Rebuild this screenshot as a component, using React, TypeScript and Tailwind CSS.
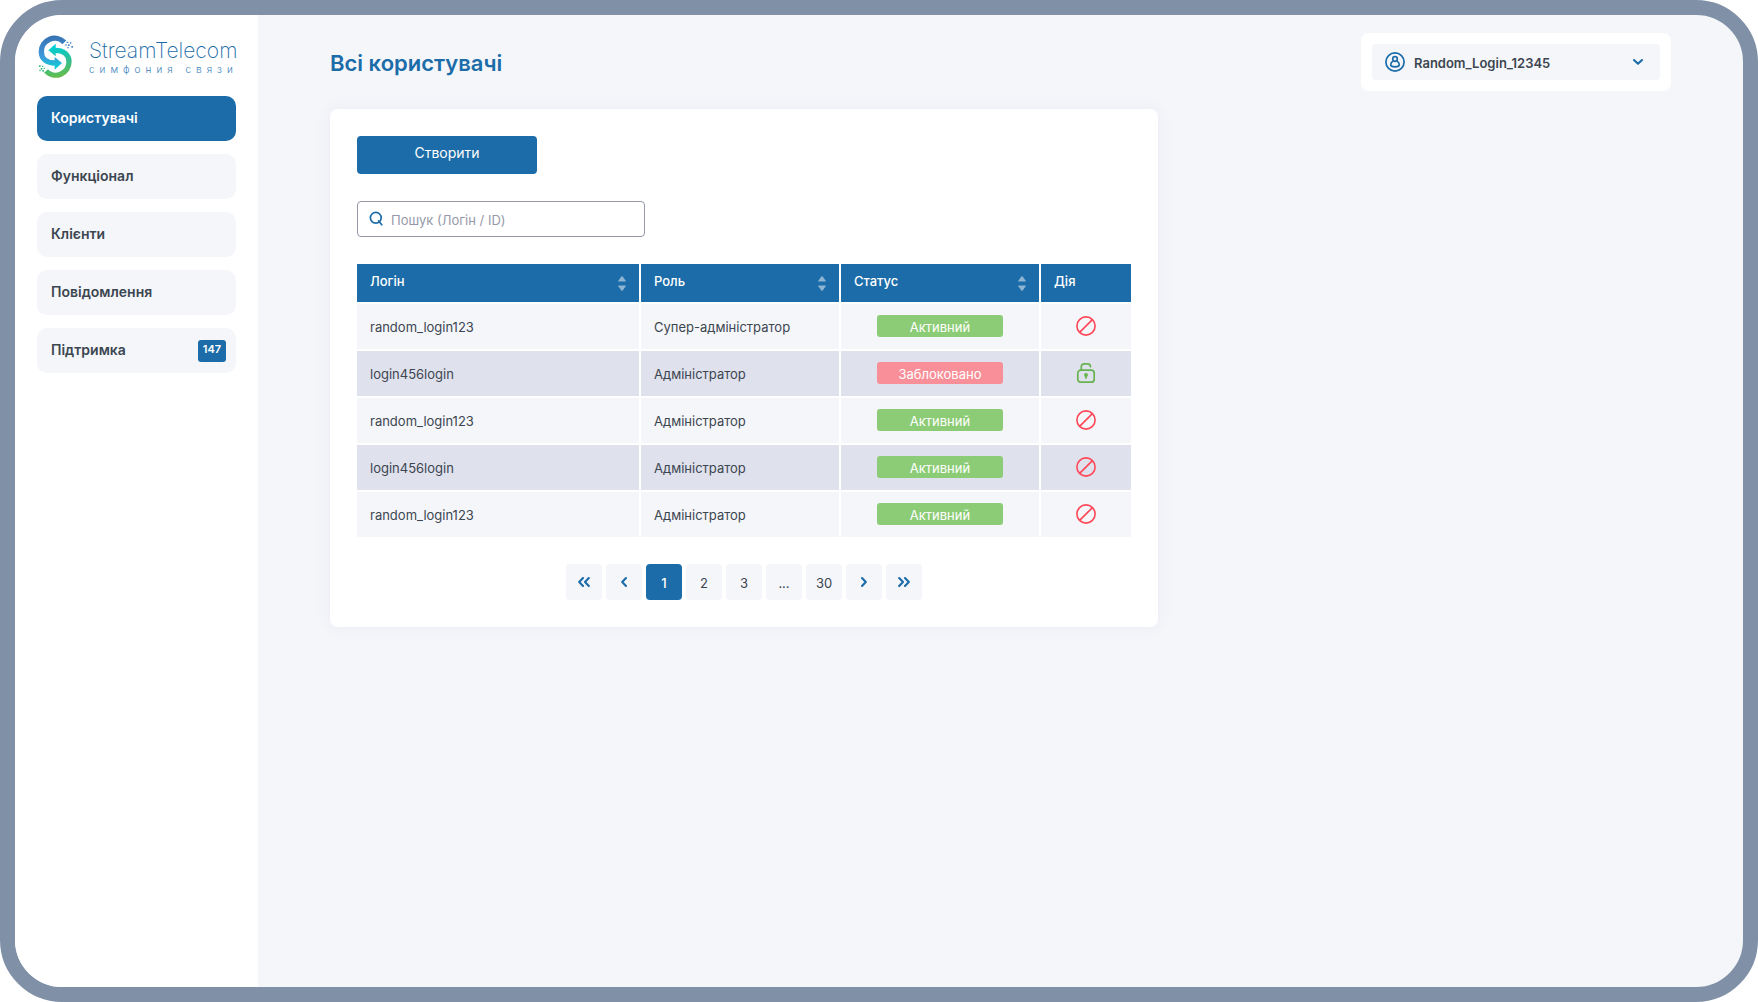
import React, { useState } from 'react';
import { clsx } from 'clsx';

const menu = [
    { label: 'Користувачі' },
    { label: 'Функціонал' },
    { label: 'Клієнти' },
    { label: 'Повідомлення' },
    { label: 'Підтримка', badge: 147 },
];

const users = [
    { login: 'random_login123', role: 'Супер-адміністратор', active: true },
    { login: 'login456login', role: 'Адміністратор', active: false },
    { login: 'random_login123', role: 'Адміністратор', active: true },
    { login: 'login456login', role: 'Адміністратор', active: true },
    { login: 'random_login123', role: 'Адміністратор', active: true },
];

const LogoMark = () => (
    <svg className="w-9 h-[43px] shrink-0" viewBox="22 16 108 129" fill="none" aria-hidden="true">
        <defs>
            <linearGradient id="blueArm" x1="80" y1="20" x2="88" y2="112" gradientUnits="userSpaceOnUse">
                <stop offset="0" stopColor="#3873b4" />
                <stop offset="0.6" stopColor="#3f97dc" />
                <stop offset="1" stopColor="#12cbd3" />
            </linearGradient>
            <linearGradient id="greenArm" x1="66" y1="52" x2="84" y2="142" gradientUnits="userSpaceOnUse">
                <stop offset="0" stopColor="#00cfd6" />
                <stop offset="0.5" stopColor="#2fbf96" />
                <stop offset="1" stopColor="#64bd4c" />
            </linearGradient>
        </defs>
        <path d="M104 38A40 40 0 0 0 35 66C35 88 52 100 77 100" stroke="url(#blueArm)" strokeWidth="16" />
        <path d="M75 82L97 100L75 120Z" fill="url(#blueArm)" />
        <path d="M49 124A40 40 0 0 0 118 96C118 74 101 62 76 62" stroke="url(#greenArm)" strokeWidth="16" />
        <path d="M78 80L56 62L78 42Z" fill="url(#greenArm)" />
        <path d="M111 36h5v4h-5zM107 44h4v4h-4zM115 44h5v5h-5zM121 38h4v4h-4zM113 52h4v4h-4zM125 49h5v5h-5z" fill="#4a86c0" />
        <path d="M28 107h5v5h-5zM37 108h4v4h-4zM33 115h5v5h-5zM42 114h4v4h-4zM29 121h4v4h-4zM38 121h5v5h-5z" fill="#3dbd7c" />
    </svg>
);

const SearchIcon = () => (
    <svg className="w-4 h-4" viewBox="0 0 16 16" fill="none" stroke="#1b6ca8" strokeWidth="1.7" strokeLinecap="round" aria-hidden="true">
        <circle cx="6.8" cy="6.8" r="5.4" />
        <path d="M9.6 10L12.8 13.8" />
    </svg>
);

const UserIcon = () => (
    <svg className="w-5 h-5" viewBox="0 0 20 20" fill="none" stroke="#1b6ca8" strokeWidth="1.7" aria-hidden="true">
        <circle cx="10" cy="10" r="9.1" />
        <circle cx="10" cy="7" r="2.3" />
        <path d="M8.2 8.9C6.6 9.8 5.7 11.2 5.7 12.8C5.7 14.2 6.7 14.8 10 14.8C13.3 14.8 14.3 14.2 14.3 12.8C14.3 11.2 13.4 9.8 11.8 8.9" />
    </svg>
);

const SortIcon = () => (
    <svg className="w-2 h-[15px] block" viewBox="0 0 8 15" fill="#8db5d3" aria-hidden="true">
        <path d="M3.3 .6Q4 -.2 4.7 .6L7.7 4.8Q8 5.6 7.2 5.6H.8Q0 5.6 .3 4.8Z" />
        <path d="M3.3 14.4Q4 15.2 4.7 14.4L7.7 10.2Q8 9.4 7.2 9.4H.8Q0 9.4 .3 10.2Z" />
    </svg>
);

const BlockIcon = () => (
    <svg className="w-5 h-5" viewBox="0 0 20 20" fill="none" stroke="#ff4757" strokeWidth="1.6" aria-hidden="true">
        <circle cx="10" cy="10" r="9.1" />
        <path d="M3.6 16.4L16.4 3.6" />
    </svg>
);

const UnlockIcon = () => (
    <svg className="w-5 h-5" viewBox="0 0 20 20" fill="none" stroke="#68b34f" strokeWidth="1.7" strokeLinecap="round" aria-hidden="true">
        <rect x="1.8" y="7.2" width="16.4" height="12" rx="3" />
        <path d="M5.3 7V4C5.3 1.9 6.5 .9 8.4 .9H11.4C13.2 .9 14.3 1.8 14.5 3.6" />
        <circle cx="10" cy="11.9" r="1.1" fill="#68b34f" />
        <path d="M10 12.5V15" />
    </svg>
);

const Chevrons = ({ double, right }: { double?: boolean; right?: boolean }) => (
    <svg
        className={clsx('w-3 h-3', right && 'rotate-180')}
        viewBox="0 0 12 12"
        fill="none"
        stroke="#1b6ca8"
        strokeWidth="2.1"
        strokeLinecap="round"
        strokeLinejoin="round"
        aria-hidden="true"
    >
        {double ? <path d="M5 2L1.2 6L5 10M10.8 2L7 6L10.8 10" /> : <path d="M8 2L4.2 6L8 10" />}
    </svg>
);

const Sidebar = () => (
    <aside className="w-[243px] shrink-0 bg-white px-[22px] pt-5">
        <a href="#" className="flex items-center gap-4">
            <LogoMark />
            <span className="flex flex-col">
                <span className="font-extralight text-[21px] leading-6 text-[#1b6ca8]">StreamTelecom</span>
                <span className="font-light text-[10px] leading-3 tracking-[5px] whitespace-nowrap text-[#3a80bb]">симфония связи</span>
            </span>
        </a>

        <nav className="mt-[18px] flex flex-col gap-[13px]">
            {menu.map((item, i) => (
                <a
                    key={item.label}
                    href="#"
                    className={clsx(
                        'h-[45px] rounded-[10px] pl-3.5 pr-2.5 flex items-center justify-between text-sm font-semibold',
                        i === 0 ? 'bg-[#1b6ca8] text-white' : 'bg-[#f4f6fa] text-[#3c4650]'
                    )}
                >
                    <span className="pb-0.5">{item.label}</span>
                    {item.badge && (
                        <span className="w-7 h-[22px] rounded-[3px] bg-[#1b6ca8] text-white text-[11px] leading-[18px] text-center">
                            {item.badge}
                        </span>
                    )}
                </a>
            ))}
        </nav>
    </aside>
);

const UserMenu = () => (
    <div className="bg-white rounded-lg p-[11px]">
        <div className="relative">
            <span className="absolute left-[13px] top-2 pointer-events-none">
                <UserIcon />
            </span>
            <select
                aria-label="Обліковий запис"
                className="appearance-none w-72 h-9 pl-[42px] pr-9 pt-1 rounded bg-[#f4f6fa] text-[13px] font-semibold text-[#3c4650]"
            >
                <option>Random_Login_12345</option>
            </select>
            <svg
                className="absolute right-4 top-3 w-3 h-3 pointer-events-none"
                viewBox="0 0 12 12"
                fill="none"
                stroke="#1b6ca8"
                strokeWidth="2.1"
                strokeLinecap="round"
                strokeLinejoin="round"
                aria-hidden="true"
            >
                <path d="M2 4L6 7.7L10 4" />
            </svg>
        </div>
    </div>
);

const UsersTable = () => (
    <table className="w-full table-fixed border-separate border-spacing-0 text-[13px] text-[#3c4650]">
        <colgroup>
            <col />
            <col className="w-[200px]" />
            <col className="w-[200px]" />
            <col className="w-[92px]" />
        </colgroup>
        <thead>
            <tr>
                {['Логін', 'Роль', 'Статус', 'Дія'].map((title, i) => (
                    <th
                        key={title}
                        scope="col"
                        className="h-[38px] p-0 bg-[#1b6ca8] border-white not-first:border-l-2 text-left font-medium text-white"
                    >
                        <span className="flex items-center justify-between px-[13px]">
                            <span className="pb-0.5">{title}</span>
                            {i < 3 && (
                                <button type="button" aria-label={`Сортувати: ${title}`}>
                                    <SortIcon />
                                </button>
                            )}
                        </span>
                    </th>
                ))}
            </tr>
        </thead>
        <tbody>
            {users.map((user, i) => (
                <tr key={i} className="bg-[#f4f6fa] even:bg-[#dfe1ed]">
                    <td className="h-[47px] border-t-2 border-white px-[13px] pt-0.5 pb-0">{user.login}</td>
                    <td className="border-t-2 border-l-2 border-white px-[13px] pt-0.5 pb-0">{user.role}</td>
                    <td className="border-t-2 border-l-2 border-white p-0 pb-0.5">
                        <span
                            className={clsx(
                                'mx-auto w-[126px] h-[22px] pt-[3px] rounded-[3px] leading-[19px] text-center text-white block',
                                user.active ? 'bg-[#8dcc76]' : 'bg-[#f98f98]'
                            )}
                        >
                            {user.active ? 'Активний' : 'Заблоковано'}
                        </span>
                    </td>
                    <td className="border-t-2 border-l-2 border-white p-0 pb-0.5">
                        <button
                            type="button"
                            className="mx-auto block"
                            aria-label={user.active ? 'Заблокувати' : 'Розблокувати'}
                        >
                            {user.active ? <BlockIcon /> : <UnlockIcon />}
                        </button>
                    </td>
                </tr>
            ))}
        </tbody>
    </table>
);

const Pagination = () => {
    const [page, setPage] = useState('1');
    const cell = 'w-9 h-9 rounded flex items-center justify-center text-[13px]';

    return (
        <nav className="flex justify-center gap-1" aria-label="Сторінки">
            <button type="button" className={clsx(cell, 'bg-[#f4f6fa]')} aria-label="Перша">
                <Chevrons double />
            </button>
            <button type="button" className={clsx(cell, 'bg-[#f4f6fa]')} aria-label="Попередня">
                <Chevrons />
            </button>
            {['1', '2', '3', '...', '30'].map((p) => (
                <button
                    key={p}
                    type="button"
                    onClick={() => p !== '...' && setPage(p)}
                    className={clsx(
                        cell,
                        'pt-1',
                        p === page ? 'bg-[#1b6ca8] text-white font-medium' : 'bg-[#f4f6fa] text-[#3c4650]'
                    )}
                >
                    {p}
                </button>
            ))}
            <button type="button" className={clsx(cell, 'bg-[#f4f6fa]')} aria-label="Наступна">
                <Chevrons right />
            </button>
            <button type="button" className={clsx(cell, 'bg-[#f4f6fa]')} aria-label="Остання">
                <Chevrons double right />
            </button>
        </nav>
    );
};

const UsersPage = () => {
    return (
        <div className="min-h-screen flex overflow-hidden rounded-[62px] border-[15px] border-[#8091a7] bg-[#f4f6fa] font-['Inter',sans-serif]">
            <Sidebar />

            <main className="flex-1 min-w-0 px-[72px] pt-[18px]">
                <header className="flex items-start justify-between">
                    <h1 className="pt-4 text-[22px] leading-7 font-semibold text-[#1b6ca8]">Всі користувачі</h1>
                    <UserMenu />
                </header>

                {/* Users card */}
                <section className="mt-[18px] w-full max-w-[828px] rounded-lg bg-white p-[27px] flex flex-col gap-[27px] shadow-[0_0_18px_rgba(60,70,110,0.06)]">
                    <button
                        type="button"
                        className="w-[180px] h-[38px] pb-1 rounded bg-[#1b6ca8] text-white text-sm"
                    >
                        Створити
                    </button>

                    <div className="relative w-full max-w-72">
                        <span className="absolute left-3 top-2.5 pointer-events-none">
                            <SearchIcon />
                        </span>
                        <input
                            type="text"
                            aria-label="Пошук"
                            placeholder="Пошук (Логін / ID)"
                            className="block w-full h-9 pl-[33px] pr-3 pt-0.5 rounded border border-[#9598a9] bg-white text-[13px] placeholder:text-[#9599a9]"
                        />
                    </div>

                    <UsersTable />
                    <Pagination />
                </section>
            </main>
        </div>
    );
};

export default UsersPage;
